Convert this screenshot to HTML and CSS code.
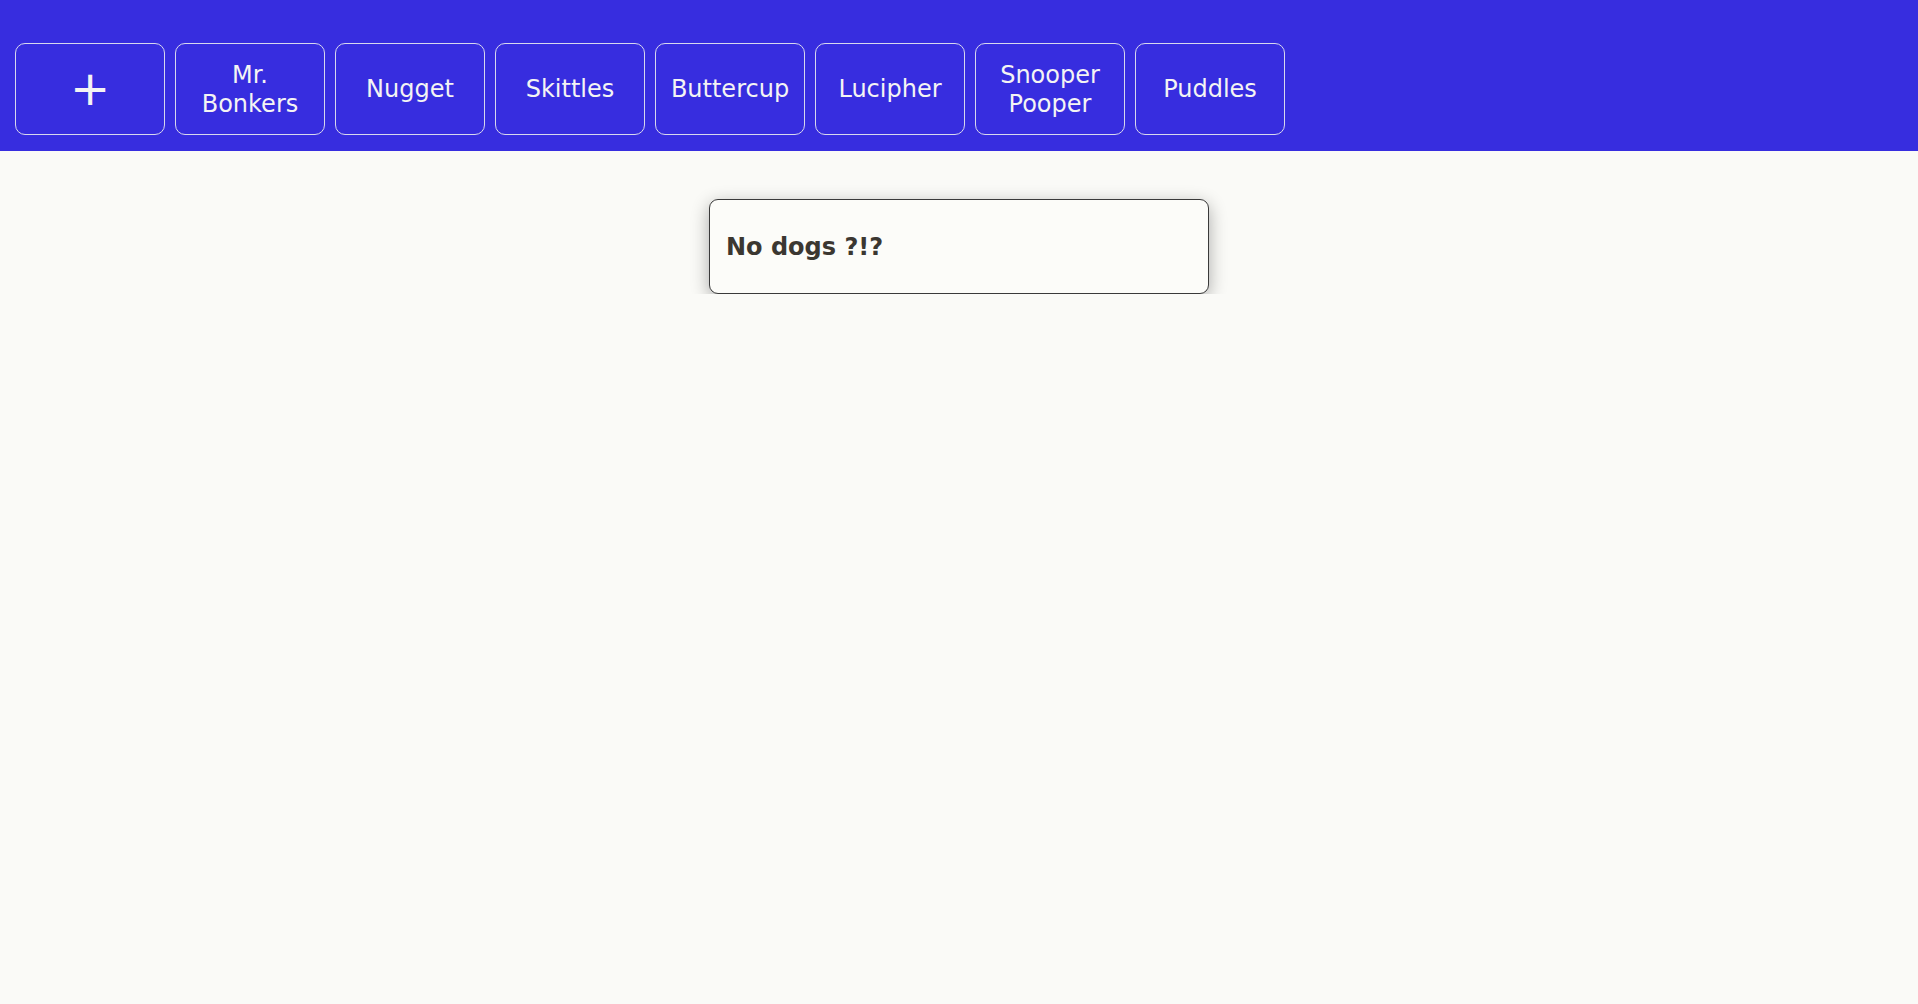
FILE: index.html
```html
<!DOCTYPE html>
<html>
<head>
<meta charset="utf-8">
<link rel="stylesheet" href="styles.css">
</head>
<body>
<header class="topbar">
  <button class="tab tab-add">+</button>
  <button class="tab">Mr.<br>Bonkers</button>
  <button class="tab">Nugget</button>
  <button class="tab">Skittles</button>
  <button class="tab">Buttercup</button>
  <button class="tab">Lucipher</button>
  <button class="tab">Snooper<br>Pooper</button>
  <button class="tab">Puddles</button>
</header>
<main class="content">
  <div class="card">No dogs ?!?</div>
</main>
</body>
</html>
```
FILE: styles.css
```css
html, body {
  margin: 0;
  padding: 0;
  background: #fafaf7;
  font-family: "DejaVu Sans", sans-serif;
}
.topbar {
  background: #372ddf;
  height: 151px;
  box-sizing: border-box;
  padding: 43px 15px 16px;
  display: flex;
  gap: 10px;
}
.tab {
  width: 150px;
  height: 92px;
  background: transparent;
  border: 1px solid #d8d8ee;
  border-radius: 10px;
  color: #f4f4f4;
  font-family: "DejaVu Sans", sans-serif;
  font-size: 24px;
  line-height: 1.2;
  padding: 1px 0 0;
  text-align: center;
}
.tab-add {
  font-size: 48px;
  line-height: 1;
  padding: 0 0 2px;
}
.content {
  display: flex;
  justify-content: center;
  padding: 48px 0 0;
}
.card {
  width: 500px;
  height: 95px;
  box-sizing: border-box;
  border: 1px solid #3a3a3a;
  border-radius: 9px;
  background: #fcfcf9;
  box-shadow: 0 5px 18px rgba(0,0,0,0.32);
  display: flex;
  align-items: center;
  padding: 0 16px;
  font-weight: bold;
  font-size: 24px;
  color: #3b3731;
}
```
